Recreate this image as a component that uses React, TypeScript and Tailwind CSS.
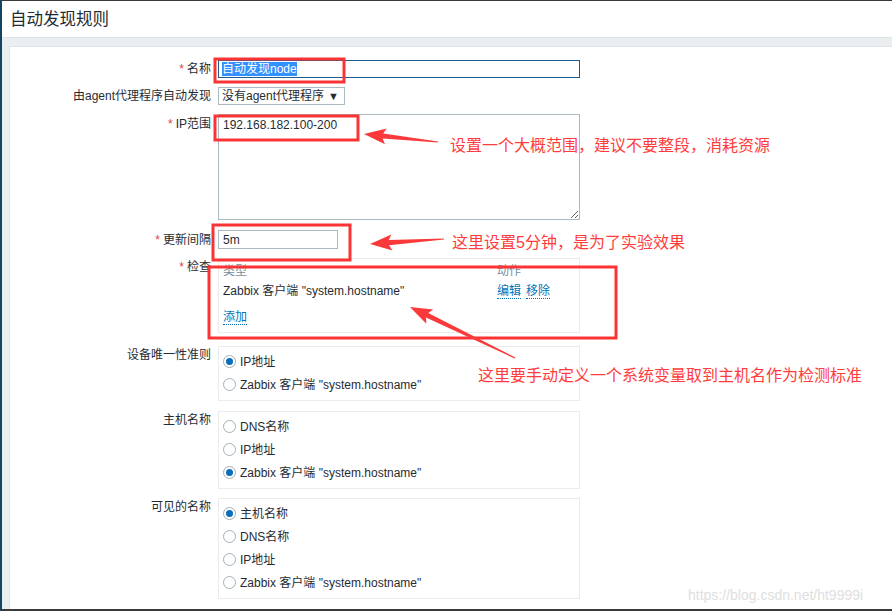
import React from 'react';

const FONT = "font-['Liberation_Sans','Noto_Sans_CJK_SC',sans-serif]";

type Pt = [number, number];

// tapered annotation arrow, tail -> tip
function arrowPoints(tail: Pt, tip: Pt) {
  const [x1, y1] = tail;
  const [x2, y2] = tip;
  const len = Math.hypot(x2 - x1, y2 - y1);
  const ux = (x2 - x1) / len;
  const uy = (y2 - y1) / len;
  const nx = -uy;
  const ny = ux;
  const headLen = 19;
  const headW = 8;
  const neckW = 2.6;
  const tailW = 0.6;
  const bx = x2 - ux * (headLen + 3);
  const by = y2 - uy * (headLen + 3);
  const kx = x2 - ux * headLen;
  const ky = y2 - uy * headLen;
  const pts: Pt[] = [
    [x1 + nx * tailW, y1 + ny * tailW],
    [kx + nx * neckW, ky + ny * neckW],
    [bx + nx * headW, by + ny * headW],
    [x2, y2],
    [bx - nx * headW, by - ny * headW],
    [kx - nx * neckW, ky - ny * neckW],
    [x1 - nx * tailW, y1 - ny * tailW],
  ];
  return pts.map((p) => p.map((v) => v.toFixed(1)).join(',')).join(' ');
}

function Label({ text, required, box }: { text: string; required?: boolean; box?: boolean }) {
  return (
    <div className={`w-[201px] shrink-0 text-right leading-[14px] ${box ? 'pt-[2px]' : ''}`}>
      {required && <span className="text-[#e04040] mr-[3px]">*</span>}
      {text}
    </div>
  );
}

function Radio({ checked, text }: { checked?: boolean; text: string }) {
  return (
    <div className="flex items-center h-[23px]">
      <span className="w-[13px] h-[13px] rounded-full border border-[#a3b0b6] bg-white flex items-center justify-center shrink-0">
        {checked && <span className="w-[7px] h-[7px] rounded-full bg-[#0a6fb8]" />}
      </span>
      <span className="ml-[4px] leading-[14px]">{text}</span>
    </div>
  );
}

function RadioBox({ items, checked }: { items: string[]; checked: number }) {
  return (
    <div className="w-[362px] border border-[#ebebeb] pl-[4px] pt-[3px] pb-[4px]">
      {items.map((t, i) => (
        <Radio key={t} text={t} checked={i === checked} />
      ))}
    </div>
  );
}

const ZBX = 'Zabbix 客户端 "system.hostname"';

export default function App() {
  const boxes = [
    { x: 213, y: 58, w: 129, h: 23 },
    { x: 213, y: 115, w: 143, h: 24 },
    { x: 211, y: 224, w: 137, h: 35 },
    { x: 207, y: 266, w: 407, h: 71 },
  ];
  const arrows: [Pt, Pt][] = [
    [[436, 141], [362, 133]],
    [[442, 238], [368, 243]],
    [[513, 357], [408, 306]],
  ];

  return (
    <div className={`${FONT} relative w-full h-[611px] overflow-hidden bg-white text-[12px] text-[#1f2c33] border-t border-[#3a3a3a] border-l-2 border-l-[#124463] border-b-2 border-b-[#3a3a3a] flex flex-col`}>
      <div className="h-[36px] shrink-0 flex items-center pl-[8px]">
        <h1 className="text-[16.5px] leading-none font-normal text-[#1f2c33]">自动发现规则</h1>
      </div>

      <div className="flex-1 bg-[#ebeef0] border-t border-[#dfe4e7] pt-[8px] pl-[7px] flex flex-col">
        <div className="flex-1 bg-white border-l border-t border-[#dde3e6] pt-[13px] flex flex-col">
          {/* 名称 */}
          <div className="flex items-center gap-[7px]">
            <Label text="名称" required />
            <div className="w-[362px] h-[18px] border border-[#1f5c92] flex items-center pl-[3px]">
              <span className="bg-[#3390ff] text-white leading-[14px]">自动发现node</span>
            </div>
          </div>

          {/* agent */}
          <div className="flex items-center gap-[7px] mt-[9px]">
            <Label text="由agent代理程序自动发现" />
            <div className="w-[127px] h-[18px] border border-[#acbbc2] flex items-center justify-between pl-[3px] pr-[5px]">
              <span className="leading-[14px]">没有agent代理程序</span>
              <span className="text-[11px] leading-none">▼</span>
            </div>
          </div>

          {/* IP范围 */}
          <div className="flex items-start gap-[7px] mt-[9px]">
            <div className="pt-[3px]">
              <Label text="IP范围" required />
            </div>
            <textarea
              readOnly
              value="192.168.182.100-200"
              className={`${FONT} w-[362px] h-[106px] border border-[#acbbc2] px-[4px] py-[3px] text-[12px] leading-[14px] text-[#1f2c33] outline-none`}
            />
          </div>

          {/* 更新间隔 */}
          <div className="flex items-center gap-[7px] mt-[10px]">
            <Label text="更新间隔" required />
            <div className="w-[120px] h-[19px] border border-[#acbbc2] flex items-center pl-[4px] leading-[14px]">5m</div>
          </div>

          {/* 检查 */}
          <div className="flex items-start gap-[7px] mt-[9px]">
            <Label text="检查" required box />
            <div className="w-[362px] h-[75px] border border-[#ebebeb] pl-[4px] pt-[5px]">
              <div className="grid grid-cols-[274px_1fr] leading-[14px] text-[#768d99]">
                <span>类型</span>
                <span>动作</span>
              </div>
              <div className="grid grid-cols-[274px_1fr] leading-[14px] mt-[6px]">
                <span>{ZBX}</span>
                <span className="flex gap-[5px] text-[#0275b8]">
                  <span className="border-b border-dotted border-[#0275b8]">编辑</span>
                  <span className="border-b border-dotted border-[#0275b8]">移除</span>
                </span>
              </div>
              <div className="mt-[11px] leading-[14px]">
                <span className="text-[#0275b8] border-b border-dotted border-[#0275b8]">添加</span>
              </div>
            </div>
          </div>

          {/* 设备唯一性准则 */}
          <div className="flex items-start gap-[7px] mt-[13px]">
            <Label text="设备唯一性准则" box />
            <RadioBox items={['IP地址', ZBX]} checked={0} />
          </div>

          {/* 主机名称 */}
          <div className="flex items-start gap-[7px] mt-[10px]">
            <Label text="主机名称" box />
            <RadioBox items={['DNS名称', 'IP地址', ZBX]} checked={2} />
          </div>

          {/* 可见的名称 */}
          <div className="flex items-start gap-[7px] mt-[9px]">
            <Label text="可见的名称" box />
            <RadioBox items={['主机名称', 'DNS名称', 'IP地址', ZBX]} checked={0} />
          </div>
        </div>
      </div>

      {/* annotations */}
      <svg className="absolute left-0 top-0 pointer-events-none" width="892" height="611">
        {boxes.map((b, i) => (
          <rect key={i} x={b.x} y={b.y} width={b.w} height={b.h} fill="none" stroke="#fa3434" strokeWidth="3" />
        ))}
        {arrows.map(([a, b], i) => (
          <polygon key={i} points={arrowPoints(a, b)} fill="#fa3a3a" />
        ))}
      </svg>
      <div className="absolute left-[448px] top-[136px] text-[16px] leading-[18px] text-[#ff3c3c]">设置一个大概范围，建议不要整段，消耗资源</div>
      <div className="absolute left-[450px] top-[233px] text-[16px] leading-[18px] text-[#ff3c3c]">这里设置5分钟，是为了实验效果</div>
      <div className="absolute left-[476px] top-[366px] text-[16px] leading-[18px] text-[#ff3c3c]">这里要手动定义一个系统变量取到主机名作为检测标准</div>
      <div className="absolute left-[686px] top-[586px] text-[14px] leading-[16px] text-[#dedede]">https://blog.csdn.net/ht9999i</div>
    </div>
  );
}
